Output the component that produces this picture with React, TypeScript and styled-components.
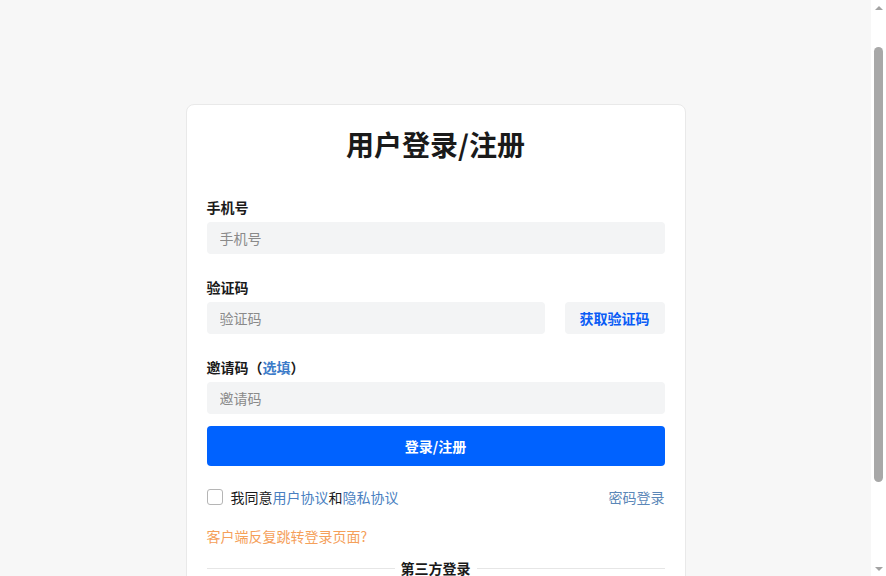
import { useState } from "react";
import styled, { createGlobalStyle } from "styled-components";

const GlobalStyle = createGlobalStyle`
  html, body {
    margin: 0;
    padding: 0;
    background: #f7f7f7;
    font-family: "Noto Sans CJK SC", "Noto Sans", sans-serif;
    color: #1f1f1f;
  }
  * { box-sizing: border-box; }
`;

const Window = styled.div`
  display: flex;
  height: 100vh;
  overflow: hidden;
`;

const Main = styled.main`
  flex: 1;
  display: flex;
  justify-content: center;
  align-items: flex-start;
  padding-top: 104px;
  overflow: hidden;
`;

/* browser-style scrollbar on the right edge */
const ScrollBar = styled.div`
  flex: none;
  width: 15px;
  display: flex;
  flex-direction: column;
  align-items: center;
  background: #ffffff;
`;

const Arrow = styled.span<{ $down?: boolean }>`
  flex: none;
  height: 15px;
  display: flex;
  align-items: center;
  justify-content: center;

  &::before {
    content: "";
    border-left: 4.5px solid transparent;
    border-right: 4.5px solid transparent;
    ${({ $down }) =>
      $down ? "border-top: 4px solid #a3a3a3;" : "border-bottom: 4px solid #a3a3a3;"}
  }
`;

const Track = styled.div`
  flex: 1;
  padding-top: 32px;
`;

const Thumb = styled.div`
  width: 9px;
  height: 435px;
  border-radius: 5px;
  background: #a8a8a8;
`;

const Card = styled.div`
  width: 500px;
  background: #ffffff;
  border: 1px solid #e9e9e9;
  border-radius: 8px;
  padding: 20px 20px 30px;
  display: flex;
  flex-direction: column;
`;

const Title = styled.h1`
  margin: 0 0 34px;
  text-align: center;
  font-size: 28px;
  line-height: 38px;
  font-weight: 700;
  color: #1a1a1a;
`;

const Field = styled.div<{ $last?: boolean }>`
  display: flex;
  flex-direction: column;
  gap: 5px;
  margin-bottom: ${({ $last }) => ($last ? "12px" : "23px")};
`;

const Label = styled.label`
  font-size: 14px;
  line-height: 20px;
  font-weight: 700;
  color: #1a1a1a;
`;

const Optional = styled.span`
  color: #3d7cc9;
`;

const Input = styled.input`
  flex: 0 0 32px;
  width: 100%;
  height: 32px;
  min-width: 0;
  border: none;
  outline: none;
  border-radius: 4px;
  background: #f3f4f5;
  padding: 0 13px;
  font-family: inherit;
  font-size: 14px;
  color: #1a1a1a;

  &::placeholder {
    color: #8a8a8a;
  }
`;

const CodeRow = styled.div`
  display: flex;
  gap: 20px;

  ${Input} {
    flex: 1;
  }
`;

const CodeButton = styled.button`
  flex: none;
  width: 100px;
  height: 32px;
  border: none;
  border-radius: 4px;
  background: #f3f4f5;
  color: #0a5cf5;
  font-family: inherit;
  font-size: 14px;
  font-weight: 700;
  cursor: pointer;
`;

const Submit = styled.button`
  height: 40px;
  border: none;
  border-radius: 4px;
  background: #0062ff;
  color: #ffffff;
  font-family: inherit;
  font-size: 14px;
  font-weight: 700;
  cursor: pointer;
`;

const AgreeRow = styled.div`
  display: flex;
  align-items: center;
  justify-content: space-between;
  margin-top: 20px;
  height: 22px;
  font-size: 14px;
`;

const Agree = styled.label`
  display: flex;
  align-items: center;
  gap: 8px;
  color: #1a1a1a;
  cursor: pointer;
`;

const Box = styled.span<{ $on: boolean }>`
  width: 16px;
  height: 16px;
  border: 1px solid #b5b5b5;
  border-radius: 3px;
  background: ${({ $on }) => ($on ? "#0062ff" : "#ffffff")};
`;

const Link = styled.a<{ $tone?: string }>`
  color: ${({ $tone }) => $tone ?? "#4a7fc1"};
  text-decoration: none;
  cursor: pointer;
`;

const Help = styled.a`
  margin-top: 17px;
  font-size: 14px;
  line-height: 22px;
  color: #f5a05a;
  text-decoration: none;
  cursor: pointer;
`;

const Divider = styled.div`
  display: flex;
  align-items: center;
  gap: 6px;
  margin-top: 11px;
  font-size: 14px;
  font-weight: 700;
  color: #1a1a1a;

  &::before,
  &::after {
    content: "";
    flex: 1;
    height: 1px;
    background: #e6e6e6;
  }
`;

const Socials = styled.div`
  display: flex;
  justify-content: center;
  gap: 28px;
  margin-top: 20px;
`;

const Social = styled.span<{ $bg: string }>`
  width: 40px;
  height: 40px;
  border-radius: 50%;
  background: ${({ $bg }) => $bg};
`;

export default function App() {
  const [agree, setAgree] = useState(false);

  return (
    <>
      <GlobalStyle />
      <Window>
        <Main>
          <Card>
            <Title>用户登录/注册</Title>

            <Field>
              <Label>手机号</Label>
              <Input placeholder="手机号" />
            </Field>

            <Field>
              <Label>验证码</Label>
              <CodeRow>
                <Input placeholder="验证码" />
                <CodeButton>获取验证码</CodeButton>
              </CodeRow>
            </Field>

            <Field $last>
              <Label>
                邀请码（<Optional>选填</Optional>）
              </Label>
              <Input placeholder="邀请码" />
            </Field>

            <Submit>登录/注册</Submit>

            <AgreeRow>
              <Agree onClick={() => setAgree(!agree)}>
                <Box $on={agree} />
                <span>
                  我同意<Link>用户协议</Link>和<Link>隐私协议</Link>
                </span>
              </Agree>
              <Link $tone="#5b87b8">密码登录</Link>
            </AgreeRow>

            <Help>客户端反复跳转登录页面?</Help>

            <Divider>第三方登录</Divider>

            <Socials>
              <Social $bg="#28c445" />
              <Social $bg="#1d9bf0" />
              <Social $bg="#12b7f5" />
            </Socials>
          </Card>
        </Main>

        <ScrollBar>
          <Arrow />
          <Track>
            <Thumb />
          </Track>
          <Arrow $down />
        </ScrollBar>
      </Window>
    </>
  );
}
